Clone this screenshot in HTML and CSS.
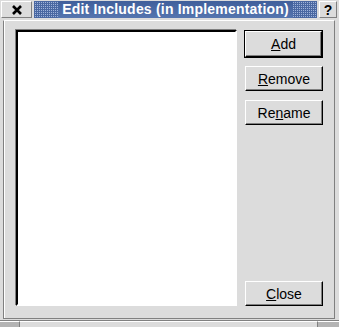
FILE: index.html
```html
<!DOCTYPE html>
<html lang="en">
<head>
    <meta charset="UTF-8">
    <title>Edit Includes (in Implementation)</title>
    <link rel="stylesheet" href="styles.css">
</head>
<body>
    <div class="window">
        <div class="titlebar">
            <div class="tb-btn close-btn">
                <svg width="12" height="10" viewBox="0 0 12 10">
                    <path d="M2 1 L10 9 M10 1 L2 9" stroke="#000" stroke-width="2.6" fill="none"/>
                </svg>
            </div>
            <div class="caption">
                <span class="caption-text">Edit Includes (in Implementation)</span>
            </div>
            <div class="tb-btn help-btn">?</div>
        </div>

        <div class="frame">
            <div class="dialog">
                <div class="listbox"></div>
                <div class="buttons">
                    <div class="default-wrap">
                        <button class="btn"><u>A</u>dd</button>
                    </div>
                    <button class="btn btn-gap"><u>R</u>emove</button>
                    <button class="btn btn-gap2">Re<u>n</u>ame</button>
                    <button class="btn btn-close"><u>C</u>lose</button>
                </div>
            </div>
        </div>

        <div class="grip">
            <div class="grip-corner"></div>
            <div class="grip-mid"></div>
            <div class="grip-corner grip-right"></div>
        </div>
    </div>
</body>
</html>
```

FILE: styles.css
```css
* {
    margin: 0;
    padding: 0;
    box-sizing: border-box;
}

body {
    background: #dcdcdc;
    font-family: "Liberation Sans", Arial, sans-serif;
}

.window {
    width: 339px;
    height: 327px;
    display: flex;
    flex-direction: column;
    background: #dcdcdc;
}

/* title bar */
.titlebar {
    height: 19px;
    display: flex;
    padding: 1px 2px 1px 1px;
    gap: 2px;
}

.tb-btn {
    background: #dcdcdc;
    border: 1px solid;
    border-color: #fff #808080 #808080 #fff;
    display: flex;
    align-items: center;
    justify-content: center;
}

.close-btn {
    width: 31px;
}

.help-btn {
    width: 18px;
    font-weight: bold;
    font-size: 14px;
    color: #000;
}

/* stippled caption background, 1px dots on a 2px grid */
.caption {
    flex: 1;
    display: flex;
    justify-content: center;
    background-image:
        linear-gradient(90deg, #4a68a2 1px, transparent 1px),
        linear-gradient(#4a68a2 1px, #9fb3d9 1px);
    background-size: 2px 2px;
}

.caption-text {
    background: linear-gradient(#405f9b, #5575af);
    color: #fff;
    font-weight: bold;
    font-size: 14px;
    letter-spacing: 0.2px;
    line-height: 17px;
    padding: 0 4px;
    white-space: nowrap;
}

/* window frame */
.frame {
    flex: 1;
    margin: 1px 4px 1px 3px;
    border-left: 1px solid #808080;
    border-top: 1px solid #fff;
    border-right: 1px solid #808080;
    border-bottom: 1px solid #808080;
    box-shadow: inset 1px 0 #fff;
    display: flex;
}

.dialog {
    flex: 1;
    display: flex;
    gap: 7px;
    padding: 9px 11px 12px 12px;
}

.listbox {
    flex: 1;
    background: #fff;
    border: 2px solid;
    border-color: #000 #fff #fff #000;
    box-shadow: -1px -1px #808080;
}

.buttons {
    width: 79px;
    display: flex;
    flex-direction: column;
}

.btn {
    font-family: "Liberation Sans", Arial, sans-serif;
    font-size: 14px;
    color: #000;
    background: #dcdcdc;
    height: 25px;
    width: 100%;
    border: 1px solid;
    border-color: #fff #000 #000 #fff;
    box-shadow: inset -1px -1px #808080;
}

.default-wrap {
    border: 1px solid #000;
}

.default-wrap .btn {
    height: 26px;
}

.btn-gap {
    margin-top: 8px;
    margin-left: 1px;
    width: 78px;
}

.btn-gap2 {
    margin-top: 9px;
    margin-left: 1px;
    width: 78px;
}

.btn-close {
    margin-top: auto;
    margin-left: 1px;
    width: 78px;
}

/* bottom resize handles */
.grip {
    height: 7px;
    display: flex;
    border-top: 1px solid #808080;
}

.grip-corner {
    width: 20px;
    background: #b4b4b4;
    border-top: 1px solid #fff;
    border-right: 1px solid #808080;
}

.grip-mid {
    flex: 1;
    background: #dcdcdc;
    border-top: 1px solid #fff;
    border-right: 1px solid #808080;
}

.grip-right {
    width: 21px;
    border-right: none;
}
```
